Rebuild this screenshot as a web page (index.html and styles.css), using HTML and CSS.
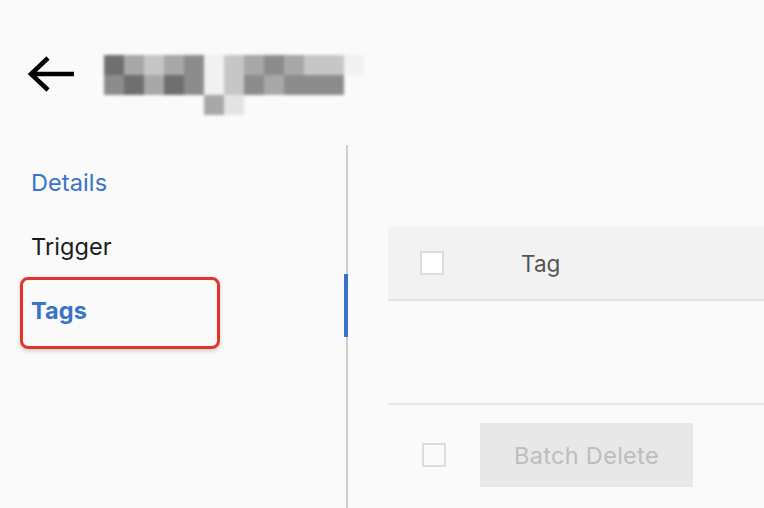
FILE: index.html
```html
<!DOCTYPE html>
<html lang="en">
<head>
    <meta charset="UTF-8">
    <meta name="viewport" content="width=device-width, initial-scale=1.0">
    <title>Tags</title>
    <link rel="stylesheet" href="styles.css">
</head>
<body>
    <header class="top">
        <button class="back" aria-label="Back">
            <svg width="50" height="36" viewBox="0 0 50 36">
                <path d="M48 18H5M22 2L5 18l17 16" fill="none" stroke="#000" stroke-width="4.5"/>
            </svg>
        </button>
        <div class="mosaic">
            <span class="s2"></span><span class="s4"></span><span class="s5"></span><span class="s4"></span><span class="s3"></span><span class="s7"></span><span class="s5"></span><span class="s4"></span><span class="s3"></span><span class="s4"></span><span class="s5"></span><span class="s5"></span><span class="s7"></span>
            <span class="s3"></span><span class="s2"></span><span class="s4"></span><span class="s2"></span><span class="s3"></span><span class="s7"></span><span class="s5"></span><span class="s3"></span><span class="s4"></span><span class="s3"></span><span class="s3"></span><span class="s3"></span><span class="s8"></span>
            <span class="s8"></span><span class="s8"></span><span class="s8"></span><span class="s8"></span><span class="s8"></span><span class="s4"></span><span class="s6"></span><span class="s8"></span><span class="s8"></span><span class="s8"></span><span class="s8"></span><span class="s8"></span><span class="s8"></span>
        </div>
    </header>

    <div class="layout">
        <nav class="side">
            <a class="side-item link">Details</a>
            <a class="side-item">Trigger</a>
            <a class="side-item active">Tags<span class="mark"></span></a>
        </nav>

        <main class="content">
            <div class="table-head">
                <span class="check"></span>
                <span class="col">Tag</span>
            </div>
            <div class="table-body"></div>
            <div class="table-foot">
                <span class="check empty"></span>
                <button class="batch" disabled>Batch Delete</button>
            </div>
        </main>
    </div>
</body>
</html>
```

FILE: styles.css
```css
:root {
    --background: #fafafa;
    --text-color: #1d1d1f;
    --primary-color: #3a72c8;
    --line: #cfcfcf;
}
* {
    box-sizing: border-box;
}
body {
    margin: 0;
    font-family: Inter, "Helvetica Neue", "Liberation Sans", sans-serif;
    background-color: var(--background);
    color: var(--text-color);
    height: 508px;
    overflow: hidden;
}
.top {
    display: flex;
    align-items: flex-start;
    height: 145px;
    padding: 55px 0 0 26px;
}
.back {
    background: none;
    border: none;
    padding: 0;
    margin-top: 1px;
    width: 50px;
    height: 36px;
}
.back svg {
    display: block;
}
.mosaic {
    display: grid;
    grid-template-columns: repeat(13, 20px);
    grid-auto-rows: 20px;
    margin-left: 28px;
    filter: blur(1.6px);
}
.s2 { background: #6f6f6f; }
.s3 { background: #8c8c8c; }
.s4 { background: #a8a8a8; }
.s5 { background: #c6c6c6; }
.s6 { background: #e4e4e4; }
.s7 { background: #f1f1f1; }
.s8 { background: transparent; }
.layout {
    display: flex;
    height: 363px;
}
.side {
    width: 348px;
    flex-shrink: 0;
    border-right: 2px solid var(--line);
    padding-top: 5px;
}
.side-item {
    display: flex;
    align-items: center;
    height: 64px;
    padding-left: 31px;
    font-size: 23.5px;
    letter-spacing: 0.1px;
    color: #1a1a1a;
    position: relative;
}
.side-item.link {
    color: var(--primary-color);
}
.side-item.active {
    color: var(--primary-color);
    font-weight: 700;
}
.side-item.active::before {
    content: "";
    position: absolute;
    left: 20px;
    top: -1px;
    width: 194px;
    height: 66px;
    border: 3px solid #e4342a;
    border-radius: 8px;
    box-shadow: 0 2px 4px rgba(0, 0, 0, 0.18);
}
.mark {
    position: absolute;
    right: -2px;
    top: -4px;
    width: 4px;
    height: 63px;
    background: var(--primary-color);
}
.content {
    flex: 1;
    padding: 82px 0 0 40px;
}
.table-head {
    display: flex;
    align-items: center;
    height: 74px;
    background: #f2f2f2;
    border-bottom: 2px solid #e3e3e3;
    padding-left: 32px;
}
.check {
    width: 24px;
    height: 24px;
    border: 2px solid #dcdcdc;
    background: #fff;
    flex-shrink: 0;
}
.check.empty {
    background: transparent;
}
.col {
    margin-left: 77px;
    font-size: 22.5px;
    color: #555;
}
.table-body {
    height: 104px;
    border-bottom: 2px solid #e6e6e6;
}
.table-foot {
    display: flex;
    align-items: center;
    padding: 18px 0 0 34px;
}
.batch {
    margin-left: 34px;
    width: 213px;
    height: 64px;
    border: none;
    background: #e8e8e8;
    color: #bdbdbd;
    font-family: inherit;
    font-size: 23.5px;
    letter-spacing: 0.3px;
}
```
